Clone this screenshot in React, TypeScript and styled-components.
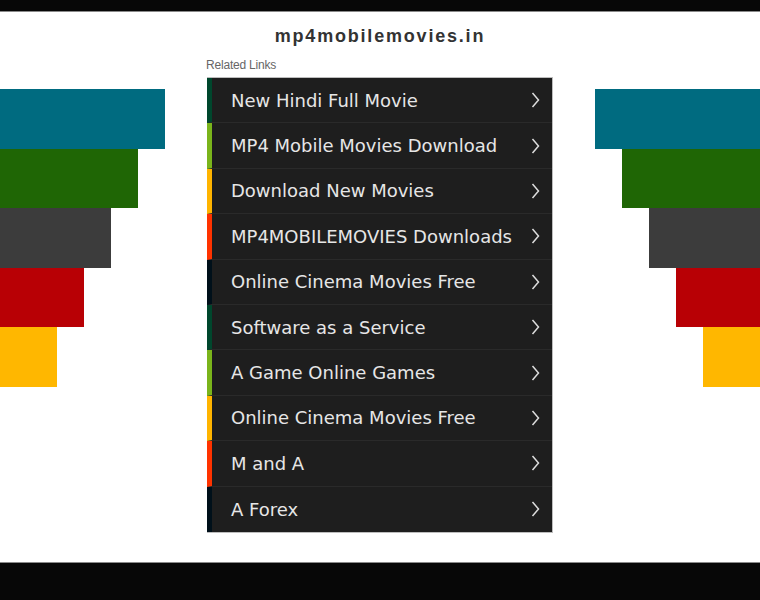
import styled, { createGlobalStyle } from "styled-components";

const GlobalStyle = createGlobalStyle`
  html, body {
    margin: 0;
    padding: 0;
    background: #ffffff;
  }
`;

const Page = styled.div`
  display: flex;
  flex-direction: column;
  width: 100%;
  height: 600px;
  overflow: hidden;
`;

const TopBar = styled.div`
  height: 12px;
  flex-shrink: 0;
  box-sizing: border-box;
  background: #070707;
  border-bottom: 1px solid #8a8a8a;
`;

const BottomBar = styled.div`
  height: 38px;
  flex-shrink: 0;
  box-sizing: border-box;
  background: #070707;
  border-top: 1px solid #8a8a8a;
`;

const Main = styled.main`
  flex: 1;
  display: grid;
  grid-template-columns: 1fr 346px 1fr;
  background: #ffffff;
`;

const Side = styled.div<{ $align: "start" | "end" }>`
  display: flex;
  flex-direction: column;
  align-items: ${(p) => (p.$align === "start" ? "flex-start" : "flex-end")};
  padding-top: 77px;
`;

const Bar = styled.div<{ $color: string; $width: number }>`
  height: 59.6px;
  width: ${(p) => p.$width}px;
  background: ${(p) => p.$color};
`;

const Center = styled.div`
  display: flex;
  flex-direction: column;
  padding-top: 12px;
`;

const Title = styled.h1`
  margin: 0;
  height: 24px;
  line-height: 24px;
  text-align: center;
  font-family: "Liberation Sans", Arial, sans-serif;
  font-size: 18px;
  font-weight: bold;
  letter-spacing: 1.8px;
  color: #333333;
`;

const Label = styled.div`
  margin: 10px 0 5px -1px;
  height: 14px;
  line-height: 14px;
  font-family: "Liberation Sans", Arial, sans-serif;
  font-size: 12px;
  letter-spacing: -0.2px;
  color: #666666;
`;

const List = styled.ul`
  margin: 0;
  padding: 0;
  list-style: none;
  border: 1px solid #bdbdbd;
  border-left: none;
  background: #1e1e1e;
`;

const Row = styled.li<{ $accent: string }>`
  display: flex;
  align-items: center;
  justify-content: space-between;
  box-sizing: border-box;
  height: 45.4px;
  padding: 0 12px 0 19px;
  border-left: 5px solid ${(p) => p.$accent};
  border-bottom: 1px solid #2a2a2a;
  font-family: "DejaVu Sans", Verdana, sans-serif;
  font-size: 18px;
  color: #e6e6e6;
  white-space: nowrap;

  &:last-child {
    border-bottom: none;
  }
`;

const Chevron = () => (
  <svg width="9" height="16" viewBox="0 0 9 16">
    <polyline
      points="1.5,1 7.5,8 1.5,15"
      fill="none"
      stroke="#dddddd"
      strokeWidth="1.5"
    />
  </svg>
);

const bars = [
  { color: "#006b80", width: 165 },
  { color: "#1f6605", width: 138 },
  { color: "#3c3c3c", width: 111 },
  { color: "#b80005", width: 84 },
  { color: "#ffb700", width: 57 },
];

const accents = ["#00472d", "#7ab41b", "#ffb400", "#ff3300", "#00101a"];

const links = [
  "New Hindi Full Movie",
  "MP4 Mobile Movies Download",
  "Download New Movies",
  "MP4MOBILEMOVIES Downloads",
  "Online Cinema Movies Free",
  "Software as a Service",
  "A Game Online Games",
  "Online Cinema Movies Free",
  "M and A",
  "A Forex",
];

export default function App() {
  return (
    <Page>
      <GlobalStyle />
      <TopBar />
      <Main>
        <Side $align="start">
          {bars.map((b) => (
            <Bar key={b.color} $color={b.color} $width={b.width} />
          ))}
        </Side>
        <Center>
          <Title>mp4mobilemovies.in</Title>
          <Label>Related Links</Label>
          <List>
            {links.map((text, i) => (
              <Row key={i} $accent={accents[i % accents.length]}>
                <span>{text}</span>
                <Chevron />
              </Row>
            ))}
          </List>
        </Center>
        <Side $align="end">
          {bars.map((b) => (
            <Bar key={b.color} $color={b.color} $width={b.width} />
          ))}
        </Side>
      </Main>
      <BottomBar />
    </Page>
  );
}
